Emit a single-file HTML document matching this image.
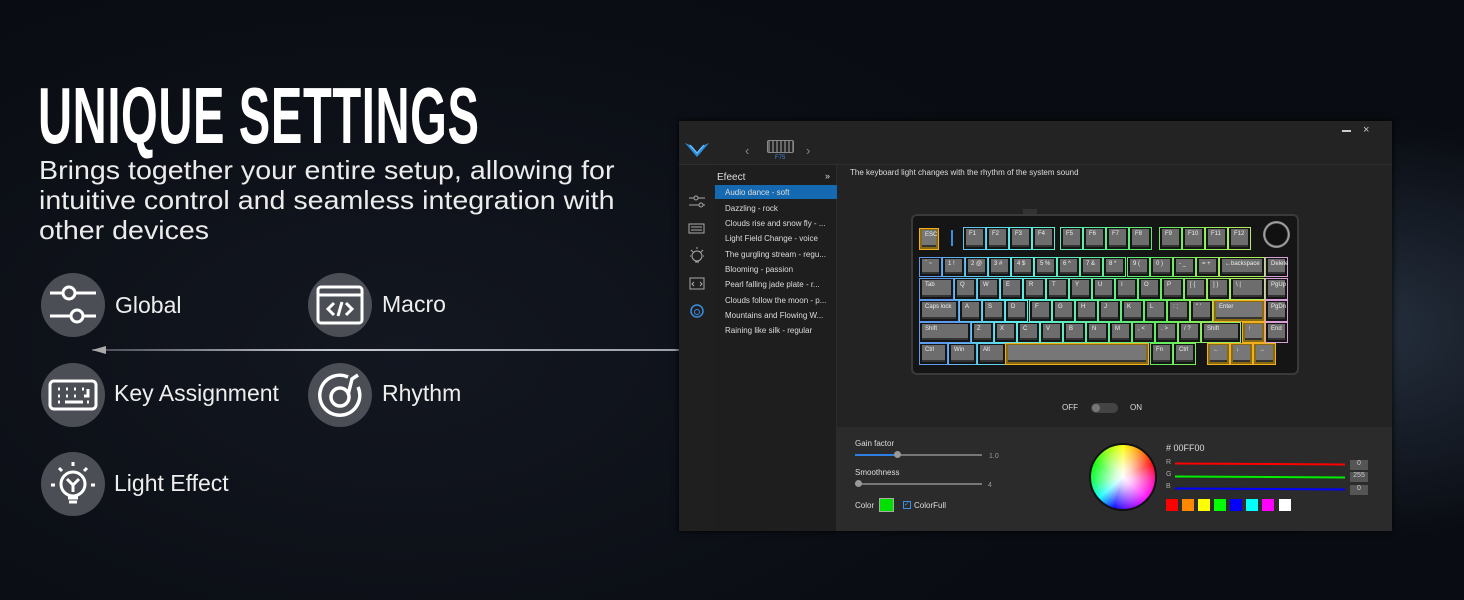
<!DOCTYPE html>
<html><head><meta charset="utf-8">
<style>
*{margin:0;padding:0;box-sizing:border-box}
body{width:1464px;height:600px;overflow:hidden;position:relative;font-family:"Liberation Sans",sans-serif;
background:radial-gradient(ellipse 500px 300px at 1350px 330px,#26303f 0%,rgba(30,38,55,0) 70%),radial-gradient(ellipse 900px 500px at 400px 350px,#131720 0%,#090c12 80%),#080b11;}
.a{position:absolute}
.title{left:38px;top:70px;font-weight:bold;font-size:80px;color:#fff;transform:scaleX(.59);transform-origin:0 0;white-space:nowrap;letter-spacing:1px}
.sub{left:39px;top:155px;font-size:26px;line-height:30px;color:#ececec;white-space:nowrap;transform:scaleX(1.1);transform-origin:0 0}
.circ{width:64px;height:64px;border-radius:50%;background:#4b4e55}
.lab{font-size:23px;color:#eee}
.win{left:679px;top:121px;width:713px;height:410px;background:#232323;box-shadow:0 0 6px #000}
.t{color:#ddd;font-size:8px;white-space:nowrap}
.kb{left:911px;top:214px;width:388px;height:161px;background:#151515;border:2px solid #3a3a3a;border-radius:6px}
.k{position:absolute;border:1px solid;}
.k i{position:absolute;left:2px;top:1px;right:2px;bottom:4px;background:#6d6d6d;font-style:normal;color:#eee;font-size:6px;padding:2px 0 0 3px;box-shadow:0 2px 0 #333}
.sw{position:absolute;top:499px;width:12px;height:12px}
</style></head><body>
<div class="a" style="left:92px;top:349px;width:588px;height:2px;background:linear-gradient(90deg,rgba(200,200,210,.3),#c8c8d0 40%,#9aa0aa)"></div>
<div class="a" style="left:92px;top:346px;width:0;height:0;border-right:14px solid #aaa;border-top:4px solid transparent;border-bottom:4px solid transparent"></div>

<div class="a title">UNIQUE SETTINGS</div>
<div class="a sub">Brings together your entire setup, allowing for<br>intuitive control and seamless integration with<br>other devices</div>

<div class="a circ" style="left:41px;top:273px"></div>
<svg class="a" style="left:41px;top:273px" width="64" height="64" fill="none" stroke="#fff" stroke-width="3"><path d="M9 20H22M34 20H55M9 43H30M42 43H55"/><circle cx="28" cy="20" r="6"/><circle cx="36" cy="43" r="6"/></svg>
<div class="a lab" style="left:115px;top:292px">Global</div>

<div class="a circ" style="left:308px;top:273px"></div>
<svg class="a" style="left:308px;top:273px" width="64" height="64" fill="none" stroke="#fff" stroke-width="3"><rect x="10" y="14" width="44" height="36" rx="3"/><path d="M10 22H54M26 30L20 36L26 42M38 30L44 36L38 42M34 29L30 43"/></svg>
<div class="a lab" style="left:382px;top:291px">Macro</div>

<div class="a circ" style="left:41px;top:363px"></div>
<svg class="a" style="left:41px;top:363px" width="64" height="64" fill="none" stroke="#fff" stroke-width="3"><rect x="9" y="18" width="46" height="28" rx="4"/><path d="M17 26h2M25 26h2M33 26h2M41 26h2M17 33h2M25 33h2M33 33h2M47 26v7h-4M17 39h2M24 39h18M46 39h2" /></svg>
<div class="a lab" style="left:114px;top:380px">Key Assignment</div>

<div class="a circ" style="left:308px;top:363px"></div>
<svg class="a" style="left:308px;top:363px" width="64" height="64" fill="none" stroke="#fff" stroke-width="3.5"><path d="M40 14A20 20 0 1 0 50 24"/><circle cx="32" cy="34" r="9"/><path d="M40 32L44 16L50 12"/></svg>
<div class="a lab" style="left:382px;top:380px">Rhythm</div>

<div class="a circ" style="left:41px;top:452px"></div>
<svg class="a" style="left:41px;top:452px" width="64" height="64" fill="none" stroke="#fff" stroke-width="3"><circle cx="32" cy="32" r="12"/><path d="M26 27L32 33L38 27M32 33V40M27 46H37M28 50H36M32 10V14M18 16L21 19M46 16L43 19M10 33H14M50 33H54"/></svg>
<div class="a lab" style="left:114px;top:470px">Light Effect</div>

<!-- window -->
<div class="a win"></div>
<div class="a" style="left:679px;top:165px;width:36px;height:366px;background:#1f1f1f"></div>
<div class="a" style="left:715px;top:165px;width:122px;height:366px;background:#1e1e1e;border-right:1px solid #2c2c2c"></div>
<div class="a" style="left:837px;top:427px;width:555px;height:104px;background:#2b2b2b"></div>
<div class="a" style="left:679px;top:164px;width:713px;height:1px;background:#2e2e2e"></div>
<svg class="a" style="left:684px;top:141px" width="26" height="18"><path d="M1 2L13 16L25 2L18 5L13 11L8 5Z" fill="#2a8fe0"/><path d="M6 4L13 12L20 4" stroke="#7cc4ff" fill="none"/></svg>
<div class="a t" style="left:745px;top:143px;font-size:13px;color:#888">‹</div>
<div class="a t" style="left:806px;top:143px;font-size:13px;color:#888">›</div>
<div class="a" style="left:767px;top:140px;width:27px;height:13px;border:1px solid #888;border-radius:2px;background:repeating-linear-gradient(90deg,#666 0 2px,transparent 2px 4px)"></div>
<div class="a t" style="left:775px;top:155px;color:#3a8ee0;font-size:6px">F75</div>
<div class="a" style="left:1342px;top:130px;width:9px;height:2px;background:#ccc"></div>
<div class="a t" style="left:1363px;top:124px;font-size:11px;color:#ccc">×</div>

<svg class="a" style="left:688px;top:194px" width="20" height="125" fill="none" stroke="#aaa" stroke-width="1"><path d="M1 4H6M10 4H17M1 11H11M15 11H17"/><circle cx="8" cy="4" r="2"/><circle cx="13" cy="11" r="2"/><rect x="1" y="30" width="15" height="9"/><path d="M3 33h11M3 36h11"/><circle cx="9" cy="62" r="5"/><path d="M9 53v2M2 62h1M15 62h1M7 68h4M3 56l2 2M15 56l-2 2"/><rect x="2" y="84" width="14" height="11"/><path d="M6 88l-2 2l2 2M12 88l2 2l-2 2"/><circle cx="9" cy="117" r="6" stroke="#3a8ee0" stroke-width="1.5"/><circle cx="9" cy="118" r="2.5" stroke="#3a8ee0"/></svg>

<div class="a t" style="left:717px;top:172px;font-size:10px">Efeect</div>
<div class="a t" style="left:825px;top:171px;font-size:9px">»</div>
<div class="a" style="left:715px;top:185px;width:122px;height:14px;background:#1569b0"></div>
<div class="a t" style="left:725px;top:188px">Audio dance - soft</div>
<div class="a t" style="left:725px;top:204px">Dazzling - rock</div>
<div class="a t" style="left:725px;top:219px">Clouds rise and snow fly - ...</div>
<div class="a t" style="left:725px;top:234px">Light Field Change - voice</div>
<div class="a t" style="left:725px;top:250px">The gurgling stream - regu...</div>
<div class="a t" style="left:725px;top:265px">Blooming - passion</div>
<div class="a t" style="left:725px;top:280px">Pearl falling jade plate - r...</div>
<div class="a t" style="left:725px;top:296px">Clouds follow the moon - p...</div>
<div class="a t" style="left:725px;top:311px">Mountains and Flowing W...</div>
<div class="a t" style="left:725px;top:326px">Raining like silk - regular</div>

<div class="a t" style="left:850px;top:168px">The keyboard light changes with the rhythm of the system sound</div>

<div class="a" style="left:1023px;top:209px;width:14px;height:6px;background:#333"></div>
<div class="a kb"></div>
<div id="keys"></div>
<div class="a" style="left:1263px;top:221px;width:27px;height:27px;border-radius:50%;background:radial-gradient(circle,#111 55%,#aaa 62%,#555 80%,#222)"></div>

<div class="a t" style="left:1062px;top:403px">OFF</div>
<div class="a" style="left:1091px;top:403px;width:27px;height:10px;border-radius:5px;background:#444"></div>
<div class="a" style="left:1092px;top:404px;width:8px;height:8px;border-radius:50%;background:#777"></div>
<div class="a t" style="left:1130px;top:403px">ON</div>

<div class="a t" style="left:855px;top:439px">Gain factor</div>
<div class="a" style="left:855px;top:454px;width:127px;height:2px;background:#777"></div>
<div class="a" style="left:855px;top:454px;width:43px;height:2px;background:#2f7fe0"></div>
<div class="a" style="left:894px;top:451px;width:7px;height:7px;border-radius:50%;background:#999"></div>
<div class="a t" style="left:989px;top:453px;color:#999;font-size:7px">1.0</div>
<div class="a t" style="left:855px;top:468px">Smoothness</div>
<div class="a" style="left:855px;top:483px;width:127px;height:2px;background:#777"></div>
<div class="a" style="left:855px;top:480px;width:7px;height:7px;border-radius:50%;background:#999"></div>
<div class="a t" style="left:988px;top:482px;color:#999;font-size:7px">4</div>
<div class="a t" style="left:855px;top:501px">Color</div>
<div class="a" style="left:879px;top:498px;width:15px;height:14px;background:#00e000;border:1px solid #aaa"></div>
<div class="a" style="left:903px;top:501px;width:8px;height:8px;border:1px solid #3a8ee0;color:#3a8ee0;font-size:7px;line-height:6px">✓</div>
<div class="a t" style="left:914px;top:501px">ColorFull</div>

<div class="a" style="left:1089px;top:443px;width:68px;height:68px;border-radius:50%;border:2px solid #111;background:radial-gradient(circle,#fff 0%,rgba(255,255,255,.8) 20%,rgba(255,255,255,0) 75%),conic-gradient(#ff0,#f80,#f00,#f0a,#f0f,#80f,#00f,#0ff,#0f4,#0f0,#8f0,#ff0)"></div>
<div class="a t" style="left:1166px;top:443px;font-size:9px">#&nbsp;00FF00</div>
<div class="a t" style="left:1166px;top:459px;color:#aaa;font-size:7px">R</div>
<div class="a t" style="left:1166px;top:471px;color:#aaa;font-size:7px">G</div>
<div class="a t" style="left:1166px;top:483px;color:#aaa;font-size:7px">B</div>
<div class="a" style="left:1175px;top:463px;width:170px;height:2px;background:#f00;transform:rotate(.3deg)"></div>
<div class="a" style="left:1175px;top:476px;width:170px;height:2px;background:#0e0;transform:rotate(.3deg)"></div>
<div class="a" style="left:1175px;top:488px;width:170px;height:2px;background:#00f;transform:rotate(.3deg)"></div>
<div class="a" style="left:1350px;top:460px;width:18px;height:10px;background:#555;color:#ccc;font-size:7px;text-align:center">0</div>
<div class="a" style="left:1350px;top:472px;width:18px;height:10px;background:#555;color:#ccc;font-size:7px;text-align:center">255</div>
<div class="a" style="left:1350px;top:485px;width:18px;height:10px;background:#555;color:#ccc;font-size:7px;text-align:center">0</div>
<div class="sw" style="left:1166px;background:#f00"></div>
<div class="sw" style="left:1182px;background:#f80"></div>
<div class="sw" style="left:1198px;background:#ff0"></div>
<div class="sw" style="left:1214px;background:#0f0"></div>
<div class="sw" style="left:1230px;background:#00f"></div>
<div class="sw" style="left:1246px;background:#0ff"></div>
<div class="sw" style="left:1262px;background:#f0f"></div>
<div class="sw" style="left:1279px;background:#fff"></div>

<script>
var U=23.06,X0=919;
function col(x){var t=(x-919)/370;if(t>0.9)return'#d9a0d8';var h=215-t*140/0.9;return'hsl('+h+',80%,65%)';}
var rows=[
[257,20,[['` ~',1],['1 !',1],['2 @',1],['3 #',1],['4 $',1],['5 %',1],['6 ^',1],['7 &',1],['8 *',1],['9 (',1],['0 )',1],['- _',1],['= +',1],['←backspace',2],['Delete',1]]],
[278,22,[['Tab',1.5],['Q',1],['W',1],['E',1],['R',1],['T',1],['Y',1],['U',1],['I',1],['O',1],['P',1],['[ {',1],['] }',1],['\\ |',1.5],['PgUp',1]]],
[300,22,[['Caps lock',1.75],['A',1],['S',1],['D',1],['F',1],['G',1],['H',1],['J',1],['K',1],['L',1],[': ;',1],['" \'',1],['Enter',2.25,1],['PgDn',1]]],
[322,21,[['Shift',2.25],['Z',1],['X',1],['C',1],['V',1],['B',1],['N',1],['M',1],[', <',1],['. >',1],['/ ?',1],['Shift',1.75],['↑',1,1],['End',1]]],
[343,22,[['Ctrl',1.25],['Win',1.25],['Alt',1.25],['',6.25,1],['Fn',1],['Ctrl',1],[null,0.5],['←',1,1],['↓',1,1],['→',1,1]]]];
var h='';
function key(x,y,w,hh,l,y2){var c=y2?'#f0b020':col(x);h+='<div class="k" style="left:'+x+'px;top:'+y+'px;width:'+w+'px;height:'+hh+'px;border-color:'+c+';'+(y2?'background:#8a6a10':'')+'"><i'+(y2?' style="background:#777"':'')+'>'+l+'</i></div>';}
rows.forEach(function(r){var x=X0;r[2].forEach(function(k){var w=k[1]*U;if(k[0]!==null)key(Math.round(x),r[0],Math.round(w),r[1],k[0],k[2]);x+=w;});});
key(919,228,20,22,'ESC',1);
h+='<div class="k" style="left:951px;top:230px;width:2px;height:16px;border-color:#3a8ee0;background:#3a8ee0"></div>';
var fx=[963,1060,1159];for(var g=0;g<3;g++)for(var i=0;i<4;i++)key(fx[g]+i*23,227,23,23,'F'+(g*4+i+1));
document.getElementById('keys').innerHTML=h;
</script>
</body></html>
